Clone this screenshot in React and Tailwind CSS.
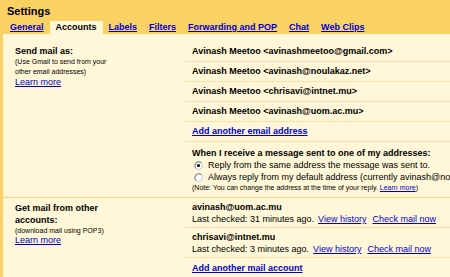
import React from 'react';

const tabs = ['General', 'Accounts', 'Labels', 'Filters', 'Forwarding and POP', 'Chat', 'Web Clips'];

const sendAs = [
  'Avinash Meetoo <avinashmeetoo@gmail.com>',
  'Avinash Meetoo <avinash@noulakaz.net>',
  'Avinash Meetoo <chrisavi@intnet.mu>',
  'Avinash Meetoo <avinash@uom.ac.mu>',
];

const accounts = [
  { email: 'avinash@uom.ac.mu', checked: '31 minutes ago.' },
  { email: 'chrisavi@intnet.mu', checked: '3 minutes ago.' },
];

const Radio = ({ checked }) => (
  <svg width="9" height="9" viewBox="0 0 9 9" className="shrink-0">
    <circle cx="4.5" cy="4.5" r="4" fill="#fff" stroke="#c8c8c8" strokeWidth="1" />
    <path d="M1.7 7.3 A4 4 0 0 1 7.3 1.7" fill="none" stroke="#777" strokeWidth="1" />
    {checked && <circle cx="4.5" cy="4.5" r="1.6" fill="#000" />}
  </svg>
);

const Link = ({ children, className = '' }) => (
  <a href="#" className={`text-[#0000cc] underline ${className}`}>{children}</a>
);

export default function App() {
  return (
    <div className="w-[450px] h-[277px] overflow-hidden bg-[#fad163] font-['Liberation_Sans',Arial,sans-serif] text-black">
      {/* Header */}
      <div className="h-[21px] pl-[7px] pt-[4px] text-[11px] font-bold leading-[14px]">Settings</div>
      <div className="flex h-[13px] pl-[4px] text-[9px] font-bold leading-[13px] whitespace-nowrap">
        {tabs.map(tab =>
          tab === 'Accounts' ? (
            <span key={tab} className="px-[6px] bg-[#fff7d7]">{tab}</span>
          ) : (
            <span key={tab} className="px-[6px]">
              <Link>{tab}</Link>
            </span>
          )
        )}
      </div>

      {/* Content */}
      <div className="ml-[3px] bg-[#fff7d7] h-[243px]">
        {/* Send mail as */}
        <div className="flex pt-[8px] border-b border-[#f3d77a]">
          <div className="w-[182px] shrink-0 pl-[12px] pt-[4px]">
            <div className="text-[9px] font-bold leading-[11px]">Send mail as:</div>
            <div className="text-[7px] leading-[10px]">
              (Use Gmail to send from your<br />other email addresses)
            </div>
            <div className="text-[9px] leading-[11px]">
              <Link>Learn more</Link>
            </div>
          </div>
          <div className="flex-1 min-w-0 whitespace-nowrap">
            {sendAs.map(addr => (
              <div key={addr} className="h-[20px] pl-[7px] border-b border-[#f1e2a9] text-[9px] font-bold leading-[19px]">
                {addr}
              </div>
            ))}
            <div className="h-[20px] pl-[7px] border-b border-[#f1e2a9] text-[9px] font-bold leading-[19px]">
              <Link>Add another email address</Link>
            </div>
            <div className="pl-[7px] pt-[5px] pb-[4px]">
              <div className="text-[9px] font-bold leading-[12px]">When I receive a message sent to one of my addresses:</div>
              <div className="flex items-center gap-[5px] pl-[2px] text-[9px] leading-[12px]">
                <Radio checked />
                <span>Reply from the same address the message was sent to.</span>
              </div>
              <div className="flex items-center gap-[5px] pl-[2px] text-[9px] leading-[12px]">
                <Radio />
                <span>Always reply from my default address (currently avinash@noulakaz.net)</span>
              </div>
              <div className="text-[7px] leading-[10px]">
                (Note: You can change the address at the time of your reply. <Link>Learn more</Link>)
              </div>
            </div>
          </div>
        </div>

        {/* Get mail from other accounts */}
        <div className="flex">
          <div className="w-[182px] shrink-0 pl-[12px] pt-[4px]">
            <div className="text-[9px] font-bold leading-[12px]">Get mail from other<br />accounts:</div>
            <div className="text-[7px] leading-[9px]">(download mail using POP3)</div>
            <div className="text-[9px] leading-[11px]">
              <Link>Learn more</Link>
            </div>
          </div>
          <div className="flex-1 min-w-0 whitespace-nowrap">
            {accounts.map(acc => (
              <div key={acc.email} className="pl-[7px] pt-[3px] pb-[2px] border-b border-[#f1e2a9] text-[9px] leading-[12px]">
                <div className="font-bold">{acc.email}</div>
                <div>
                  Last checked: {acc.checked}
                  <Link className="ml-[4px]">View history</Link>
                  <Link className="ml-[6px]">Check mail now</Link>
                </div>
              </div>
            ))}
            <div className="pl-[7px] pt-[4px] text-[9px] font-bold leading-[12px]">
              <Link>Add another mail account</Link>
            </div>
          </div>
        </div>
      </div>
    </div>
  );
}
